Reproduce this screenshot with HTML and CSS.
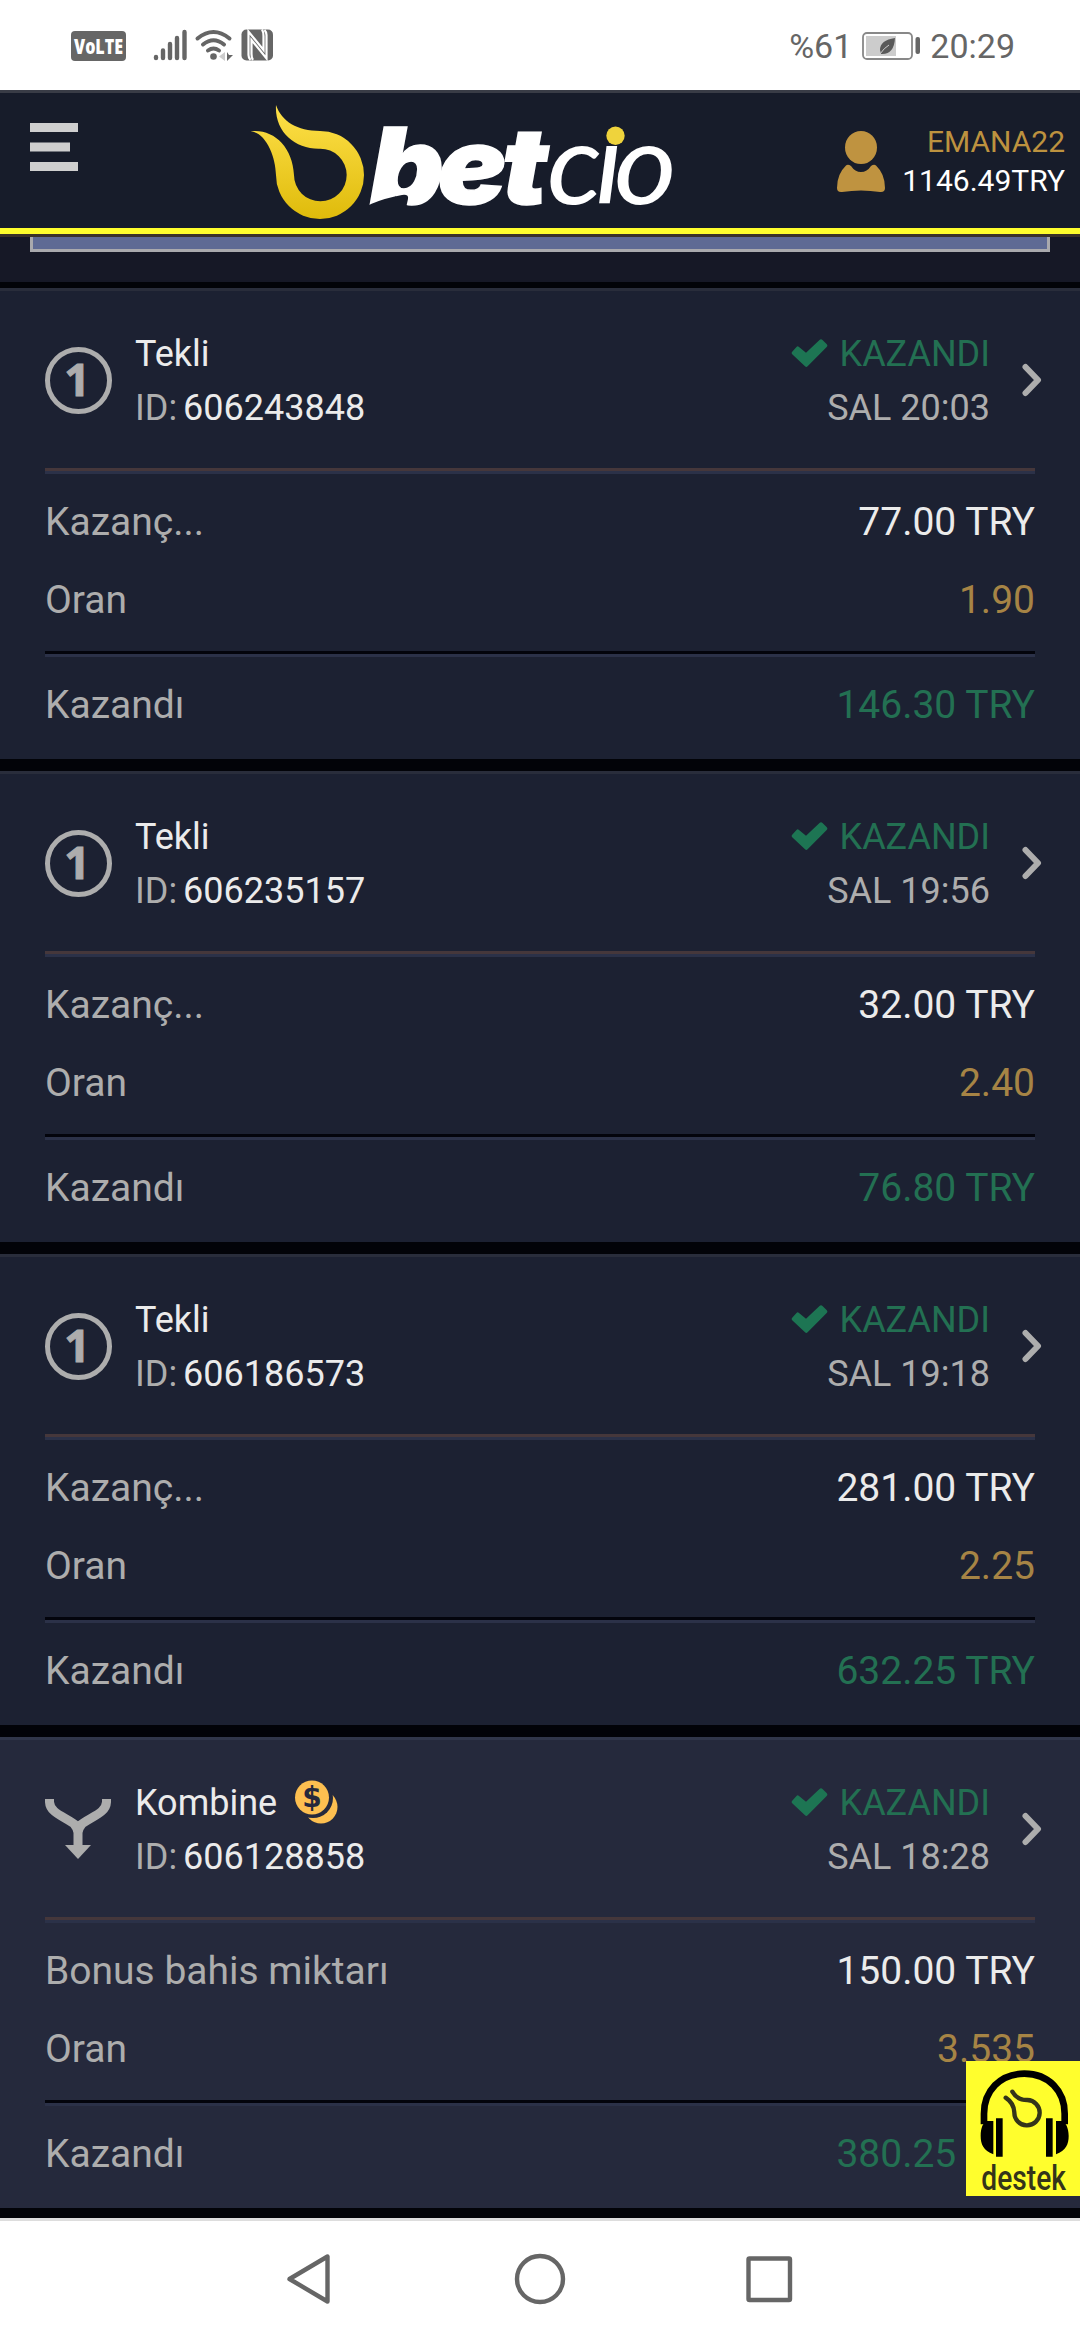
FILE: index.html
```html
<!DOCTYPE html>
<html lang="tr">
<head>
<meta charset="utf-8">
<title>Bahislerim</title>
<link rel="stylesheet" href="styles.css">
</head>
<body>
<svg class="defs" width="0" height="0" aria-hidden="true">
  <symbol id="check" viewBox="0 0 37 28"><path d="M1.200 12.700L5.500 7.900Q6.500 6.800 7.700 7.800L15 13.800L28.500 .9Q30 -.3 31.500 .9L35.800 5.300Q37 6.700 35.700 8L16.600 27.300Q15.300 28.600 14 27.300L1.200 15.200Q0 14 1.200 12.700Z" fill="#1d7553"/></symbol>
  <symbol id="chevron" viewBox="0 0 20 34"><path d="M3.500 4L16 17L3.500 30" fill="none" stroke="#adadad" stroke-width="6" stroke-linecap="round" stroke-linejoin="round"/></symbol>
</svg>
<div class="screen">
  <div class="status">
    <svg class="volte" width="55" height="30" viewBox="0 0 55 30"><rect width="55" height="30" rx="4" fill="#666"/><text x="3" y="23" textLength="49" lengthAdjust="spacingAndGlyphs">VoLTE</text></svg>
    <svg class="signals" width="122" height="34" viewBox="153 28 122 34">
      <g stroke="#666" stroke-width="4.400" stroke-linecap="round"><path d="M156 57v1M163 50.500v7.500M170 44v14M177 38v20M184.500 32v26"/></g>
      <g fill="none" stroke="#666" stroke-width="4" stroke-linecap="round"><path d="M197.500 38.500Q213.500 25.500 229.500 38.500M203 44.500Q213.500 36 224 44.500M208 50.500Q213.500 46.500 219 50.500"/></g>
      <circle cx="213.500" cy="56.500" r="3.300" fill="#666"/>
      <path d="M225 52v9l-6-4.500z" fill="#ccc"/><path d="M227 52l2 3h4l-4 4-2 2z" fill="#666"/>
      <rect x="241.500" y="29.500" width="31.500" height="31" rx="5" fill="#666"/>
      <path d="M250.500 60q-2-2-2-5V31.500L263.500 50V36q0-4-1.500-6.500M264.500 30q2 2 2 5V58.500L251.500 40V54q0 4 1.500 6" fill="none" stroke="#fff" stroke-width="2.200"/>
    </svg>
    <span class="pct">%61</span>
    <svg class="battery" width="60" height="30" viewBox="861 31 60 30">
      <rect x="863" y="33" width="49" height="26" rx="4" fill="#fff" stroke="#888" stroke-width="1.800"/>
      <rect x="866" y="36" width="30" height="20" fill="#ccc"/>
      <path d="M895 38Q880 40 880 50L881 54Q894 55 895 38Z" fill="#595959"/><path d="M880 54Q884 48 889 45" stroke="#ccc" fill="none"/>
      <rect x="915.500" y="37" width="4.500" height="17" rx="2" fill="#666"/>
    </svg>
    <span class="clock">20:29</span>
  </div>
  <header class="topbar">
    <svg class="menu" width="48" height="48" viewBox="0 0 48 48"><path d="M0 0h48v9H0zM0 19.500h40v9H0zM0 39h48v9H0z" fill="#cfcfcf"/></svg>
    <svg class="logo" width="430" height="120" viewBox="250 103 430 120">
      <defs><linearGradient id="gold" x1="0" y1="0" x2="0" y2="1"><stop offset="0" stop-color="#ffe14a"/><stop offset="1" stop-color="#dfbb0b"/></linearGradient></defs>
      <g transform="translate(240 90) scale(.33333)"><path fill="url(#gold)" d="M108 45C125 95 172 122 240 123A132 132 0 1 1 108 255C107 200 78 128 32 124C100 116 158 170 162 255A79 79 0 1 0 240 176C165 178 103 125 108 45Z"/></g>
      <text class="logo-bold" transform="translate(370 204) scale(1.08 1)" y="0" x="0 62.500 122">bet</text>
      <path d="M366 208L371 204Q385 198 402 195Q409 194 408 199L406 208Z" fill="#171c2a"/>
      <text class="logo-thin" transform="translate(547 204) scale(1.08 1)" y="0" x="0 44.500 62">cio</text>
      <path d="M598 110h38v34h-38z" fill="#171c2a"/>
      <circle cx="615.500" cy="135.700" r="9.200" fill="#efd33c"/>
    </svg>
    <div class="account">
      <svg width="50" height="64" viewBox="835 130 50 64"><ellipse cx="860" cy="147.500" rx="16" ry="16.500" fill="#bf9340"/><path d="M845 165.500Q847 164 850 166Q854 172 860 172Q866 172 870 166Q873 164 875 165.500Q884 174 884 188Q884 192.500 879 192Q860 189 841 192Q836 192.500 836 188Q836 174 845 165.500Z" fill="#bf9340"/></svg>
      <div class="who"><span class="name">EMANA22</span><span class="balance">1146.49TRY</span></div>
    </div>
  </header>
  <div class="strip"><div class="field"></div></div>
  <main class="list">
    <section class="card">
      <div class="head"><span class="single">1</span><div class="kind"><span class="title">Tekli</span><span class="ident">ID: <b>606243848</b></span></div><div class="result"><span class="won"><svg width="37" height="28"><use href="#check"/></svg>KAZANDI</span><span>SAL 20:03</span></div><svg class="go" width="20" height="34"><use href="#chevron"/></svg></div>
      <div class="rows"><div class="row"><span>Kazanç...</span><span class="white">77.00 TRY</span></div><div class="row"><span>Oran</span><span class="gold">1.90</span></div></div>
      <div class="total"><span>Kazandı</span><span class="green">146.30 TRY</span></div>
    </section>
    <section class="card">
      <div class="head"><span class="single">1</span><div class="kind"><span class="title">Tekli</span><span class="ident">ID: <b>606235157</b></span></div><div class="result"><span class="won"><svg width="37" height="28"><use href="#check"/></svg>KAZANDI</span><span>SAL 19:56</span></div><svg class="go" width="20" height="34"><use href="#chevron"/></svg></div>
      <div class="rows"><div class="row"><span>Kazanç...</span><span class="white">32.00 TRY</span></div><div class="row"><span>Oran</span><span class="gold">2.40</span></div></div>
      <div class="total"><span>Kazandı</span><span class="green">76.80 TRY</span></div>
    </section>
    <section class="card">
      <div class="head"><span class="single">1</span><div class="kind"><span class="title">Tekli</span><span class="ident">ID: <b>606186573</b></span></div><div class="result"><span class="won"><svg width="37" height="28"><use href="#check"/></svg>KAZANDI</span><span>SAL 19:18</span></div><svg class="go" width="20" height="34"><use href="#chevron"/></svg></div>
      <div class="rows"><div class="row"><span>Kazanç...</span><span class="white">281.00 TRY</span></div><div class="row"><span>Oran</span><span class="gold">2.25</span></div></div>
      <div class="total"><span>Kazandı</span><span class="green">632.25 TRY</span></div>
    </section>
    <section class="card bonus">
      <div class="head">
        <svg class="multi" width="66" height="60" viewBox="0 0 66 60"><path d="M4.500 0V3C5 15 22 18 33 28C44 18 61 15 61.500 3V0M33 50V34Q33 30 29 25M33 34Q33 30 37 25" fill="none" stroke="#adadad" stroke-width="9"/><path d="M20 46H46L33 60Z" fill="#adadad"/></svg>
        <div class="kind"><span class="title">Kombine<svg class="coins" width="43" height="44" viewBox="0 0 43 44"><circle cx="26" cy="27" r="16.500" fill="#fdbf50"/><circle cx="18" cy="18" r="20" fill="#25293c"/><circle cx="17" cy="17.500" r="17" fill="#fdbf50"/><text class="dollar" x="17" y="26.500" text-anchor="middle">$</text></svg></span><span class="ident">ID: <b>606128858</b></span></div><div class="result"><span class="won"><svg width="37" height="28"><use href="#check"/></svg>KAZANDI</span><span>SAL 18:28</span></div><svg class="go" width="20" height="34"><use href="#chevron"/></svg></div>
      <div class="rows"><div class="row"><span>Bonus bahis miktarı</span><span class="white">150.00 TRY</span></div><div class="row"><span>Oran</span><span class="gold">3.535</span></div></div>
      <div class="total"><span>Kazandı</span><span class="green">380.25 TRY</span></div>
    </section>
  </main>
  <nav class="nav">
    <svg width="510" height="54" viewBox="285 2252 510 54" fill="none" stroke="#666" stroke-width="4.400" stroke-linejoin="round"><path d="M289.500 2279L327.500 2256.500V2301.500Z"/><circle cx="540" cy="2279" r="23"/><rect x="748.500" y="2258.500" width="41.500" height="41.500" rx="1"/></svg>
  </nav>
  <div class="support">
    <svg width="114" height="135" viewBox="0 0 342 405">
      <path d="M54 190V158C54 90 102 38 175 38S296 90 296 158V190" fill="none" stroke="#000" stroke-width="20"/>
      <path d="M82 180V280C52 268 44 250 44 225C44 200 52 184 62 180ZM270 180V280C300 268 308 250 308 225C308 200 298 184 290 180ZM90 172H110V287H90ZM240 172H260V287H240Z"/>
      <path d="M139 92C148 108 165 117 184 117A38 38 0 1 1 145 154C144 135 134 120 119 110" fill="none" stroke="#34341a" stroke-width="13" stroke-linecap="round"/>
      <text class="destek" x="46" y="386" textLength="254" lengthAdjust="spacingAndGlyphs">destek</text>
    </svg>
  </div>
</div>
</body>
</html>
```
FILE: styles.css
```css
* { box-sizing: border-box; }
body { margin: 0; background: #020308; font-family: Roboto, sans-serif; }
svg { display: block; flex: none; overflow: visible; }
.defs { position: absolute; }
.screen { position: relative; width: 1080px; height: 2340px; display: flex; flex-direction: column; overflow: hidden; }
.status { height: 90px; background: #fff; color: #666; display: flex; align-items: center; padding: 0 65px 0 71px; font-size: 34px; }
.volte { font: 800 21px "Open Sans", sans-serif; fill: #fff; margin-top: 2px; }
.signals { margin-left: 27px; }
.pct { margin-left: auto; margin-top: 1px; }
.battery { margin: 2px 9px 0 9px; }
.clock { margin-top: 1px; }
.topbar { height: 147px; background: #171c2a; border-top: 3px solid #393c46; border-bottom: 3px solid #3a3229; box-shadow: inset 0 -6px #fffe2d; display: flex; align-items: flex-start; padding-right: 15px; }
.menu { margin: 30px 0 0 30px; }
.logo { margin: 10px 0 0 172px; }
.logo-bold { font: italic 900 106px Inter, sans-serif; fill: #fff; stroke: #fff; stroke-width: 1.500px; }
.logo-thin { font: italic 400 112px Lato, sans-serif; fill: #fff; }
.account { margin: 37px 0 0 auto; display: flex; gap: 16px; }
.who { display: flex; flex-direction: column; align-items: flex-end; font-size: 30px; line-height: 39px; margin-top: -8px; }
.name { color: #bd923f; }
.balance { color: #fff; }
.strip { height: 51px; background: #161826; border-bottom: 6px solid #020308; padding: 0 30px; }
.field { height: 15px; background: #5e6a94; border: 3px solid #a9a9ad; border-top: 0; }
.list { flex: 1; display: flex; flex-direction: column; gap: 12px; }
.card { height: 471px; background: #1c2132; border-top: 3px solid #292d3b; padding: 0 45px; color: #adadad; font-size: 39px; }
.bonus { background: #25293c; border-top-color: #30364a; }
.head { height: 183px; border-bottom: 3px solid #2b3148; box-shadow: inset 0 -3px #45373b; display: flex; align-items: flex-start; font-size: 36px; line-height: 54px; }
.single { width: 67px; height: 67px; margin: 56px 23px 0 0; border: 5px solid #adadad; border-radius: 50%; font: 700 45px/54px "Open Sans", sans-serif; text-align: center; text-indent: -3px; -webkit-text-stroke: 1px #adadad; }
.multi { margin: 59px 24px 0 0; }
.kind, .result { display: flex; flex-direction: column; margin-top: 36px; }
.title { color: #ebebeb; display: flex; height: 54px; }
.coins { margin: 4px 0 0 18px; }
.ident b { font-weight: 400; color: #ebebeb; margin-left: -3px; }
.result { margin-left: auto; align-items: flex-end; }
.won { display: flex; align-items: center; gap: 12px; color: #237052; }
.won svg { margin-top: -2px; }
.go { margin: 72px -7px 0 32px; }
.rows { height: 183px; padding-top: 9px; border-bottom: 3px solid #2b3148; box-shadow: inset 0 -3px #03040c; }
.row, .total { height: 78px; line-height: 78px; display: flex; justify-content: space-between; }
.total { margin-top: 9px; }
.white { color: #ebebeb; }
.gold { color: #a68445; }
.green { color: #237052; }
.dollar { font: 700 28px "DejaVu Sans", sans-serif; fill: #25293c; }
.nav { height: 122px; background: #fff; border-top: 3px solid #ddd; display: flex; justify-content: center; padding-top: 31px; }
.support { position: absolute; right: 0; top: 2061px; width: 114px; height: 135px; background: #fffe2d; }
.destek { font: 500 104px Roboto, sans-serif; fill: #34341a; }
```
